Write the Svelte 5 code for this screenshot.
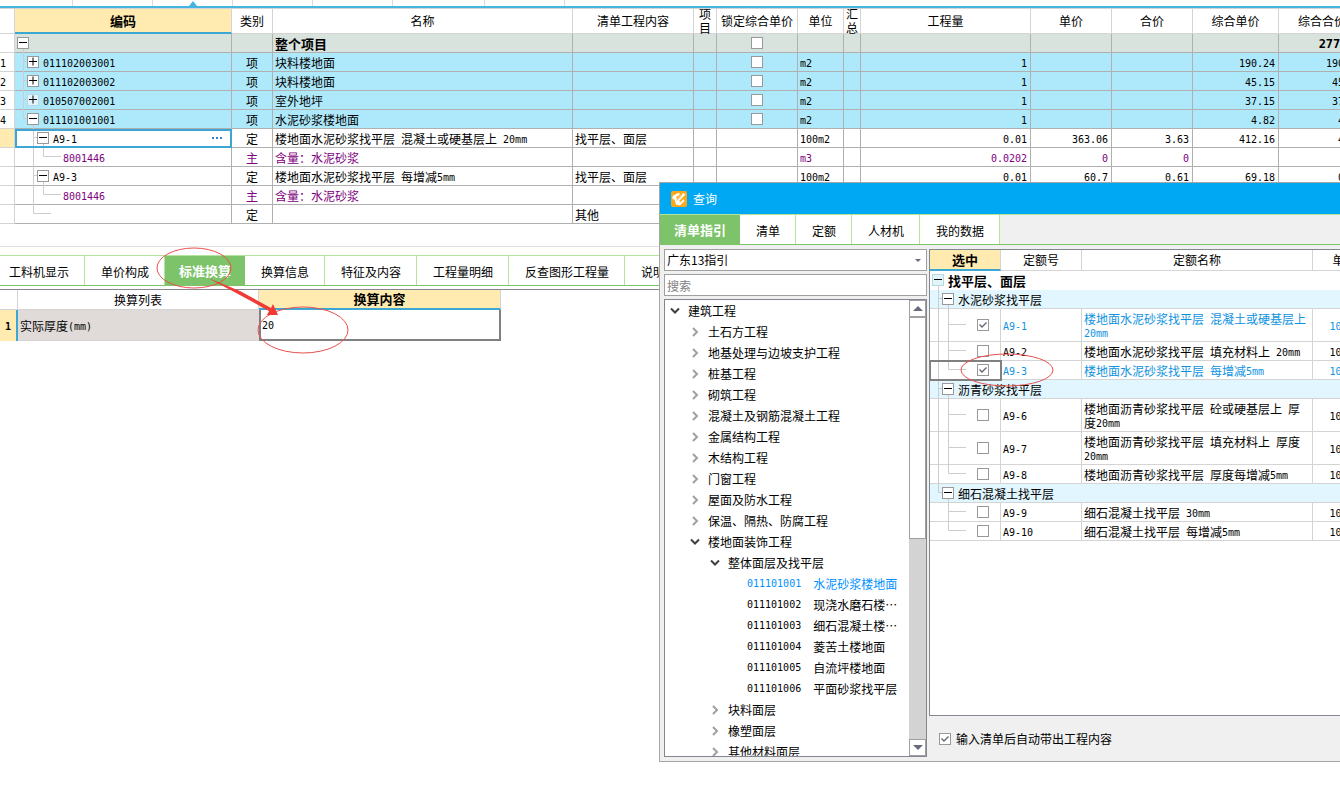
<script>
  const columns = [
    { label: '', width: 15 },
    { label: '编码', width: 217, active: true },
    { label: '类别', width: 41 },
    { label: '名称', width: 300 },
    { label: '清单工程内容', width: 121 },
    { label: '项目', width: 23 },
    { label: '锁定综合单价', width: 81 },
    { label: '单位', width: 46 },
    { label: '汇总', width: 17 },
    { label: '工程量', width: 170 },
    { label: '单价', width: 81 },
    { label: '合价', width: 81 },
    { label: '综合单价', width: 86 },
    { label: '综合合价', width: 87 }
  ];

  const branch = 'M8.5 0V19M9 8.5H12';
  const subBranch = 'M18.5 0V19M19 8.5H22M28.5 15V19';
  const leafLine = 'M18.5 0V19M28.5 0V8.5H46';

  const rows = [
    { n: '', kind: 'total', level: 0, open: true, guide: 'M8.5 15V19', code: '', type: '', name: '整个项目', content: '', lock: true, unit: '', v: ['', '', '', '', '277.36'] },
    { n: '1', kind: 'item', level: 1, open: false, guide: branch, code: '011102003001', type: '项', name: '块料楼地面', content: '', lock: true, unit: 'm2', v: ['1', '', '', '190.24', '190.24'] },
    { n: '2', kind: 'item', level: 1, open: false, guide: branch, code: '011102003002', type: '项', name: '块料楼地面', content: '', lock: true, unit: 'm2', v: ['1', '', '', '45.15', '45.15'] },
    { n: '3', kind: 'item', level: 1, open: false, soft: true, guide: branch, code: '010507002001', type: '项', name: '室外地坪', content: '', lock: true, unit: 'm2', v: ['1', '', '', '37.15', '37.15'] },
    { n: '4', kind: 'item', level: 1, open: true, guide: 'M8.5 0V8.5H12M18.5 15V19', code: '011101001001', type: '项', name: '水泥砂浆楼地面', content: '', lock: true, unit: 'm2', v: ['1', '', '', '4.82', '4.82'] },
    { n: '', kind: 'quota', level: 2, open: true, selected: true, guide: subBranch, code: 'A9-1', type: '定', name: '楼地面水泥砂浆找平层 混凝土或硬基层上 20mm', content: '找平层、面层', unit: '100m2', v: ['0.01', '363.06', '3.63', '412.16', '4.12'] },
    { n: '', kind: 'material', level: 4, leaf: true, guide: leafLine, code: '8001446', type: '主', name: '含量：水泥砂浆', content: '', unit: 'm3', v: ['0.0202', '0', '0', '', ''] },
    { n: '', kind: 'quota', level: 2, open: true, guide: subBranch, code: 'A9-3', type: '定', name: '楼地面水泥砂浆找平层 每增减5mm', content: '找平层、面层', unit: '100m2', v: ['0.01', '60.7', '0.61', '69.18', '0.69'] },
    { n: '', kind: 'material', level: 4, leaf: true, guide: leafLine, code: '8001446', type: '主', name: '含量：水泥砂浆', content: '', unit: '', v: ['', '', '', '', ''] },
    { n: '', kind: 'quota', level: 4, leaf: true, guide: 'M18.5 0V8.5H36', code: '', type: '定', name: '', content: '其他', unit: '', v: ['', '', '', '', ''] }
  ];

  const detailTabs = ['工料机显示', '单价构成', '标准换算', '换算信息', '特征及内容', '工程量明细', '反查图形工程量', '说明信息'];
  const queryTabs = ['清单指引', '清单', '定额', '人材机', '我的数据'];

  const tree = [
    { level: 0, open: true, name: '建筑工程' },
    { level: 1, name: '土石方工程' },
    { level: 1, name: '地基处理与边坡支护工程' },
    { level: 1, name: '桩基工程' },
    { level: 1, name: '砌筑工程' },
    { level: 1, name: '混凝土及钢筋混凝土工程' },
    { level: 1, name: '金属结构工程' },
    { level: 1, name: '木结构工程' },
    { level: 1, name: '门窗工程' },
    { level: 1, name: '屋面及防水工程' },
    { level: 1, name: '保温、隔热、防腐工程' },
    { level: 1, open: true, name: '楼地面装饰工程' },
    { level: 2, open: true, name: '整体面层及找平层' },
    { code: '011101001', name: '水泥砂浆楼地面', active: true },
    { code: '011101002', name: '现浇水磨石楼…' },
    { code: '011101003', name: '细石混凝土楼…' },
    { code: '011101004', name: '菱苦土楼地面' },
    { code: '011101005', name: '自流坪楼地面' },
    { code: '011101006', name: '平面砂浆找平层' },
    { level: 2, name: '块料面层' },
    { level: 2, name: '橡塑面层' },
    { level: 2, name: '其他材料面层' }
  ];

  const quotas = [
    { group: 0, name: '找平层、面层', guide: 'M8.5 15V19' },
    { group: 1, name: '水泥砂浆找平层', guide: 'M8.5 0V19M9 8.5H12M18.5 15V19' },
    { code: 'A9-1', name: '楼地面水泥砂浆找平层 混凝土或硬基层上 20mm', checked: true, tall: true, guide: 'M8.5 0V33M18.5 0V33M19 15.5H36' },
    { code: 'A9-2', name: '楼地面水泥砂浆找平层 填充材料上 20mm', guide: 'M8.5 0V19M18.5 0V19M19 8.5H36' },
    { code: 'A9-3', name: '楼地面水泥砂浆找平层 每增减5mm', checked: true, focus: true, guide: 'M8.5 0V19M18.5 0V8.5H36' },
    { group: 1, name: '沥青砂浆找平层', guide: 'M8.5 0V19M9 8.5H12M18.5 15V19' },
    { code: 'A9-6', name: '楼地面沥青砂浆找平层 砼或硬基层上 厚度20mm', tall: true, guide: 'M8.5 0V33M18.5 0V33M19 15.5H36' },
    { code: 'A9-7', name: '楼地面沥青砂浆找平层 填充材料上 厚度20mm', tall: true, guide: 'M8.5 0V33M18.5 0V33M19 15.5H36' },
    { code: 'A9-8', name: '楼地面沥青砂浆找平层 厚度每增减5mm', guide: 'M8.5 0V19M18.5 0V8.5H36' },
    { group: 1, name: '细石混凝土找平层', guide: 'M8.5 0V8.5H12M18.5 15V19' },
    { code: 'A9-9', name: '细石混凝土找平层 30mm', guide: 'M18.5 0V19M19 8.5H36' },
    { code: 'A9-10', name: '细石混凝土找平层 每增减5mm', guide: 'M18.5 0V8.5H36' }
  ];

  // Latin runs use a half-width face beside the full-width CJK glyphs.
  const runs = (text) => text.split(/([\x20-\x7e]+)/).filter(Boolean);
  const isLatin = (run) => /^[\x20-\x7e]/.test(run);
</script>

{#snippet mixed(text)}{#each runs(text) as run}{#if isLatin(run)}<span class="latin">{run}</span>{:else}{run}{/if}{/each}{/snippet}

{#snippet expander(open, soft)}
  <button class="expander" class:soft aria-label={open ? '折叠' : '展开'}>
    <svg width="10" height="10" viewBox="0 0 10 10"><path d={open ? 'M1 4.5H9' : 'M1 4.5H9M5 0.5V8.5'} /></svg>
  </button>
{/snippet}

<main class="app" lang="zh-CN">
  <div class="strip">
    {#each [73, 80, 80, 80, 80, 92, 80] as width, i}
      <div class="strip-tab" style:width="{width}px">
        {#if i === 2}<svg width="8" height="5" viewBox="0 0 8 5"><path d="M4 0L8 5H0Z" /></svg>{/if}
      </div>
    {/each}
  </div>

  <section class="budget">
    <table class="grid" style:width="{columns.reduce((sum, c) => sum + c.width, 0)}px">
      <colgroup>
        {#each columns as c}<col style:width="{c.width}px" />{/each}
      </colgroup>
      <thead>
        <tr>
          {#each columns as c}<th class:active={c.active}><div class="head">{c.label}</div></th>{/each}
        </tr>
      </thead>
      <tbody>
        {#each rows as r}
          <tr class={r.kind}>
            <td class="num" class:current={r.selected}>{@render mixed(r.n)}</td>
            <td class="code" class:selected={r.selected}>
              <div class="node">
                <svg class="guide" width={r.leaf ? 44 : r.level * 10 + 2} height="18"><path d={r.guide} /></svg>
                {#if !r.leaf}{@render expander(r.open, r.soft)}{/if}
                <span class="label">{@render mixed(r.code)}</span>
                {#if r.selected}
                  <button class="more" aria-label="选择编码">
                    <svg width="11" height="2"><path d="M0 0H2V2H0ZM4 0H6V2H4ZM8 0H10V2H8Z" /></svg>
                  </button>
                {/if}
              </div>
            </td>
            <td class="center">{r.type}</td>
            <td>{@render mixed(r.name)}</td>
            <td>{r.content}</td>
            <td></td>
            <td class="check">{#if r.lock}<input type="checkbox" aria-label="锁定综合单价" />{/if}</td>
            <td>{@render mixed(r.unit)}</td>
            <td></td>
            {#each r.v as value}<td class="right">{@render mixed(value)}</td>{/each}
          </tr>
        {/each}
      </tbody>
    </table>
  </section>

  <section class="detail">
    <nav class="tabs">
      {#each detailTabs as tab, i}<button class:active={i === 2}>{tab}</button>{/each}
    </nav>
    <div class="pane">
      <table class="convert">
        <colgroup><col class="c-num" /><col class="c-list" /><col /></colgroup>
        <thead>
          <tr><th></th><th>换算列表</th><th class="active">换算内容</th></tr>
        </thead>
        <tbody>
          <tr>
            <td class="index">{@render mixed('1')}</td>
            <td class="item"><label for="thickness">{@render mixed('实际厚度(mm)')}</label></td>
            <td class="value"><input id="thickness" type="text" value="20" /></td>
          </tr>
        </tbody>
      </table>
    </div>
  </section>

  <section class="dialog" role="dialog" aria-label="查询">
    <header>
      <svg width="16" height="16" viewBox="0 0 16 16">
        <rect width="16" height="16" rx="2" fill="#fba81c" />
        <path d="M1.5 5L7 2L9 2.5L8 4.5L5.5 5.5L5.5 8.5L12.5 2L14.5 3.5L8 10L10 11L12.5 8L13.5 10L9 14.5L5 13.5L3.5 8.5L1.5 8Z" fill="#fff" />
        <path d="M5.5 9.5L11 4.5" stroke="#fba81c" stroke-width="0.8" fill="none" />
      </svg>
      <span>查询</span>
    </header>
    <nav class="tabs query">
      {#each queryTabs as tab, i}<button class:active={i === 0}>{tab}</button>{/each}
    </nav>
    <div class="body">
      <div class="side">
        <div class="combo">
          <select aria-label="指引库"><option>广东13指引</option></select>
          <svg width="6" height="3" viewBox="0 0 6 3"><path d="M0 0H6L3 3Z" /></svg>
        </div>
        <input class="search" type="text" placeholder="搜索" aria-label="搜索" />
        <div class="tree">
          <ul>
            {#each tree as t}
              {#if t.code}
                <li class="leaf" class:active={t.active}>{@render mixed(t.code)}<span>{t.name}</span></li>
              {:else}
                <li class="l{t.level}">
                  <button class="chevron" class:open={t.open} aria-label={t.open ? '折叠' : '展开'}>
                    <svg width="10" height="10" viewBox="0 0 10 10"><path d={t.open ? 'M1 2.5L5 6.5L9 2.5' : 'M3 1L7 5L3 9'} /></svg>
                  </button>
                  <span>{t.name}</span>
                </li>
              {/if}
            {/each}
          </ul>
          <div class="scrollbar">
            <button aria-label="向上"><svg width="10" height="5" viewBox="0 0 10 5"><path d="M5 0L10 5H0Z" /></svg></button>
            <div class="thumb"></div>
            <div class="track"></div>
            <button aria-label="向下"><svg width="10" height="5" viewBox="0 0 10 5"><path d="M0 0H10L5 5Z" /></svg></button>
          </div>
        </div>
      </div>
      <div class="content">
        <div class="results">
          <table class="quota-table">
            <colgroup><col class="q-pick" /><col class="q-code" /><col class="q-name" /><col /></colgroup>
            <thead>
              <tr><th class="active">选中</th><th>定额号</th><th>定额名称</th><th>单位</th></tr>
            </thead>
            <tbody>
              {#each quotas as q}
                {#if q.code}
                  <tr class:tall={q.tall} class:picked={q.checked}>
                    <td class="pick" class:focus={q.focus}>
                      <div class="node">
                        <svg class="guide" width="47" height={q.tall ? 32 : 18}><path d={q.guide} /></svg>
                        <input type="checkbox" checked={q.checked} aria-label={q.code} />
                      </div>
                    </td>
                    <td>{@render mixed(q.code)}</td>
                    <td>{@render mixed(q.name)}</td>
                    <td class="center">{@render mixed('100m2')}</td>
                  </tr>
                {:else}
                  <tr class="group g{q.group}">
                    <td colspan="4">
                      <div class="node">
                        <svg class="guide" width={q.group * 10 + 2} height="18"><path d={q.guide} /></svg>
                        {@render expander(true, q.group === 0)}
                        <span class="label">{q.name}</span>
                      </div>
                    </td>
                  </tr>
                {/if}
              {/each}
            </tbody>
          </table>
        </div>
        <label class="auto"><input type="checkbox" checked />输入清单后自动带出工程内容</label>
      </div>
    </div>
  </section>

  <svg class="marks" aria-hidden="true">
    <ellipse cx="194" cy="268" rx="37" ry="20" />
    <ellipse cx="303" cy="330" rx="45" ry="23" />
    <ellipse cx="1007" cy="370" rx="46" ry="16" />
    <path d="M208 278L240 291L271 308L273 304L278 315L267 315L269 311L238 294Z" />
  </svg>
</main>

<style>
  :global(body) {
    margin: 0;
    background: #fff;
  }
  .app {
    position: relative;
    min-height: 100vh;
    overflow: hidden;
    color: #000;
    font: 12px/14px 'Noto Sans CJK SC', sans-serif;
  }
  .app * {
    box-sizing: border-box;
  }
  .latin {
    font-family: 'DejaVu Sans Mono', monospace;
    font-size: 10px;
    line-height: 10px;
    vertical-align: 1px;
  }
  button,
  input,
  select {
    margin: 0;
    padding: 0;
    border: 0;
    border-radius: 0;
    background: none;
    color: inherit;
    font: inherit;
  }
  table {
    table-layout: fixed;
    border-collapse: separate;
    border-spacing: 0;
  }
  th,
  td {
    overflow: hidden;
    text-align: left;
    white-space: nowrap;
  }
  td {
    padding: 2px 2px 0;
  }
  th {
    padding: 0;
    font-weight: 400;
    text-align: center;
    border-right: 1px solid #d4d4d4;
    border-bottom: 1px solid #d4d4d4;
  }
  th.active {
    font-size: 13px;
    font-weight: 700;
    background: #ffebb0;
    border-bottom: 2px solid #3ca7d2;
  }

  .strip {
    display: flex;
    height: 8px;
    border-bottom: 2px solid #45b5e0;
  }
  .strip-tab {
    display: flex;
    align-items: flex-end;
    justify-content: center;
    border-right: 1px solid #dadada;
  }
  .strip-tab svg {
    fill: #45b5e0;
  }

  .budget {
    height: 239px;
    overflow: hidden;
    border-top: 1px solid #d4d4d4;
    border-bottom: 1px solid #e0e0e0;
  }
  .grid th {
    height: 25px;
    overflow: visible;
  }
  .head {
    display: flex;
    align-items: center;
    justify-content: center;
    height: 23px;
    padding: 0 2px;
    white-space: normal;
  }
  .grid td {
    height: 19px;
    border-right: 1px solid #b0b0b0;
    border-bottom: 1px solid #b0b0b0;
  }
  .grid td.num {
    padding: 2px 0 0;
    background: #fff;
    border-color: #d4d4d4;
  }
  .grid td.num.current {
    background: #ffebb0;
  }
  .total td {
    background: #d9e3de;
    font-size: 13px;
    font-weight: 700;
  }
  .total .latin {
    font-size: 12px;
  }
  .item td {
    background: #aee9fb;
  }
  .material {
    color: #800080;
  }
  .center {
    text-align: center;
  }
  td.right {
    padding-right: 3px;
    text-align: right;
  }
  td.check {
    padding: 0;
  }
  td.check input {
    margin: 0 auto;
  }
  td.code,
  td.pick,
  .group td {
    padding: 0;
    overflow: visible;
  }
  td.selected {
    outline: 2px solid #3ca7d2;
    outline-offset: -2px;
  }
  .node {
    display: flex;
    align-items: center;
  }
  .guide {
    flex: none;
    overflow: visible;
    fill: none;
    stroke: #cdcdcd;
  }
  .label {
    padding: 2px 0 0 4px;
  }
  .expander {
    z-index: 1;
    flex: none;
    width: 12px;
    height: 12px;
    border: 1px solid #999;
    background: #fff;
  }
  .expander.soft {
    border-color: #b5d9e2;
    background: #e3f5fa;
  }
  .expander svg {
    display: block;
    fill: none;
    stroke: #000;
  }
  .more {
    display: flex;
    align-items: center;
    height: 14px;
    margin-left: auto;
    padding-right: 8px;
    fill: #3284c8;
  }
  input[type='checkbox'] {
    display: block;
    flex: none;
    width: 12px;
    height: 12px;
    appearance: none;
    border: 1px solid #999;
    background: #fff;
  }
  input[type='checkbox']:checked {
    background: #fff url("data:image/svg+xml,%3Csvg xmlns='http://www.w3.org/2000/svg' width='10' height='10'%3E%3Cpath d='M1.5 4.5L4 7L8.5 2.5' fill='none' stroke='%23626776' stroke-width='1.4'/%3E%3C/svg%3E");
  }

  .tabs {
    display: flex;
    height: 31px;
    border-top: 1px solid #b4e39b;
    border-bottom: 1px solid #7dc36a;
  }
  .tabs button {
    flex: none;
    padding: 2px 15px 0 16px;
    border-right: 1px solid #b4e39b;
    background: #fff;
  }
  .tabs .active {
    padding: 0 14px;
    border: 0;
    background: #7dc36a;
    color: #fff;
    font-size: 13px;
    font-weight: 700;
  }
  .detail {
    display: flex;
    flex-direction: column;
    gap: 3px;
    padding-top: 8px;
  }
  .detail .tabs button:first-child {
    padding-left: 9px;
  }
  .pane {
    border-top: 1px solid #828790;
  }
  .convert {
    width: 501px;
  }
  .c-num {
    width: 18px;
  }
  .c-list {
    width: 241px;
  }
  .convert th {
    height: 20px;
  }
  .convert td {
    height: 31px;
  }
  .index {
    padding: 0;
    background: #ffebb0;
    border-right: 2px solid #3ca7d2;
    font-weight: 700;
    text-align: center;
  }
  .item {
    background: #e0dbd8;
    border-bottom: 1px solid #d4d4d4;
  }
  .value {
    padding: 0 1px;
    border: 2px solid #808080;
    border-top: 0;
  }
  .value input {
    display: block;
    width: 100%;
    height: 28px;
    padding-top: 2px;
    font: 10px 'DejaVu Sans Mono', monospace;
  }

  .dialog {
    position: absolute;
    top: 182px;
    left: 659px;
    right: 0;
    border: 1px solid #a6a6a6;
    border-right: 0;
    background: #f0f0f0;
  }
  .dialog header {
    display: flex;
    align-items: center;
    gap: 6px;
    height: 31px;
    padding-left: 11px;
    background: #00a8f3;
    color: #fff;
  }
  .body {
    display: grid;
    grid-template-columns: 263px minmax(0, 1fr);
    gap: 2px;
    padding: 4px 0 4px 4px;
  }
  .side {
    display: flex;
    flex-direction: column;
    gap: 3px;
  }
  .combo {
    display: flex;
    align-items: center;
    height: 22px;
    padding-right: 5px;
    border: 1px solid #a0a0a0;
    background: #fff;
  }
  .combo select {
    flex: 1;
    height: 20px;
    padding-left: 2px;
    appearance: none;
  }
  .combo svg,
  .scrollbar svg {
    display: block;
    fill: #666b7d;
  }
  .search {
    height: 22px;
    padding: 0 2px;
    border: 1px solid #a0a0a0;
    background: #fff;
  }
  .search::placeholder {
    color: #808080;
    opacity: 1;
  }
  .tree {
    display: flex;
    height: 458px;
    overflow: hidden;
    border: 1px solid #828790;
    background: #fff;
  }
  .tree ul {
    flex: 1;
    margin: 0;
    padding: 0;
    overflow: hidden;
    list-style: none;
  }
  .tree li {
    display: flex;
    align-items: center;
    gap: 8px;
    height: 21px;
    padding-left: 5px;
    white-space: nowrap;
  }
  .tree .l1 {
    padding-left: 25px;
  }
  .tree .l2 {
    padding-left: 45px;
  }
  .tree .leaf {
    gap: 12px;
    padding-left: 82px;
  }
  .leaf.active {
    color: #0091ff;
  }
  .chevron svg {
    display: block;
    fill: none;
    stroke: #a0a0a0;
    stroke-width: 2;
  }
  .chevron.open svg {
    stroke: #404040;
  }
  .scrollbar {
    display: flex;
    flex-direction: column;
    width: 17px;
    background: #d3d3d3;
  }
  .scrollbar button {
    display: flex;
    flex: none;
    align-items: center;
    justify-content: center;
    height: 17px;
    border: 1px solid #a0a0a0;
    background: #fff;
  }
  .thumb {
    height: 222px;
    border: 1px solid #a0a0a0;
    background: #fff;
  }
  .track {
    flex: 1;
  }
  .content {
    display: flex;
    flex-direction: column;
  }
  .results {
    flex: 1;
    overflow: hidden;
    border: 1px solid #828790;
    border-right: 0;
    background: #fff;
  }
  .quota-table {
    width: 447px;
  }
  .q-pick {
    width: 71px;
  }
  .q-code {
    width: 81px;
  }
  .q-name {
    width: 231px;
  }
  .quota-table th {
    height: 21px;
  }
  .quota-table td {
    height: 19px;
    border-right: 1px solid #d4d4d4;
    border-bottom: 1px solid #d4d4d4;
  }
  .quota-table .tall td {
    height: 33px;
    white-space: normal;
  }
  .picked {
    color: #0f93e0;
  }
  td.focus {
    outline: 2px solid #808080;
    outline-offset: -1px;
  }
  .g0 {
    font-size: 13px;
    font-weight: 700;
  }
  .g1 td {
    background: #e1f6ff;
  }
  .quota-table .g0 td {
    border-bottom-color: #fff;
  }
  .auto {
    display: flex;
    align-items: center;
    gap: 5px;
    height: 41px;
    padding: 4px 0 0 10px;
  }

  .marks {
    position: absolute;
    top: 0;
    left: 0;
    width: 100%;
    height: 100%;
    pointer-events: none;
    fill: none;
    stroke: #e8504e;
  }
  .marks path {
    fill: #f03a35;
    stroke: none;
  }
</style>
